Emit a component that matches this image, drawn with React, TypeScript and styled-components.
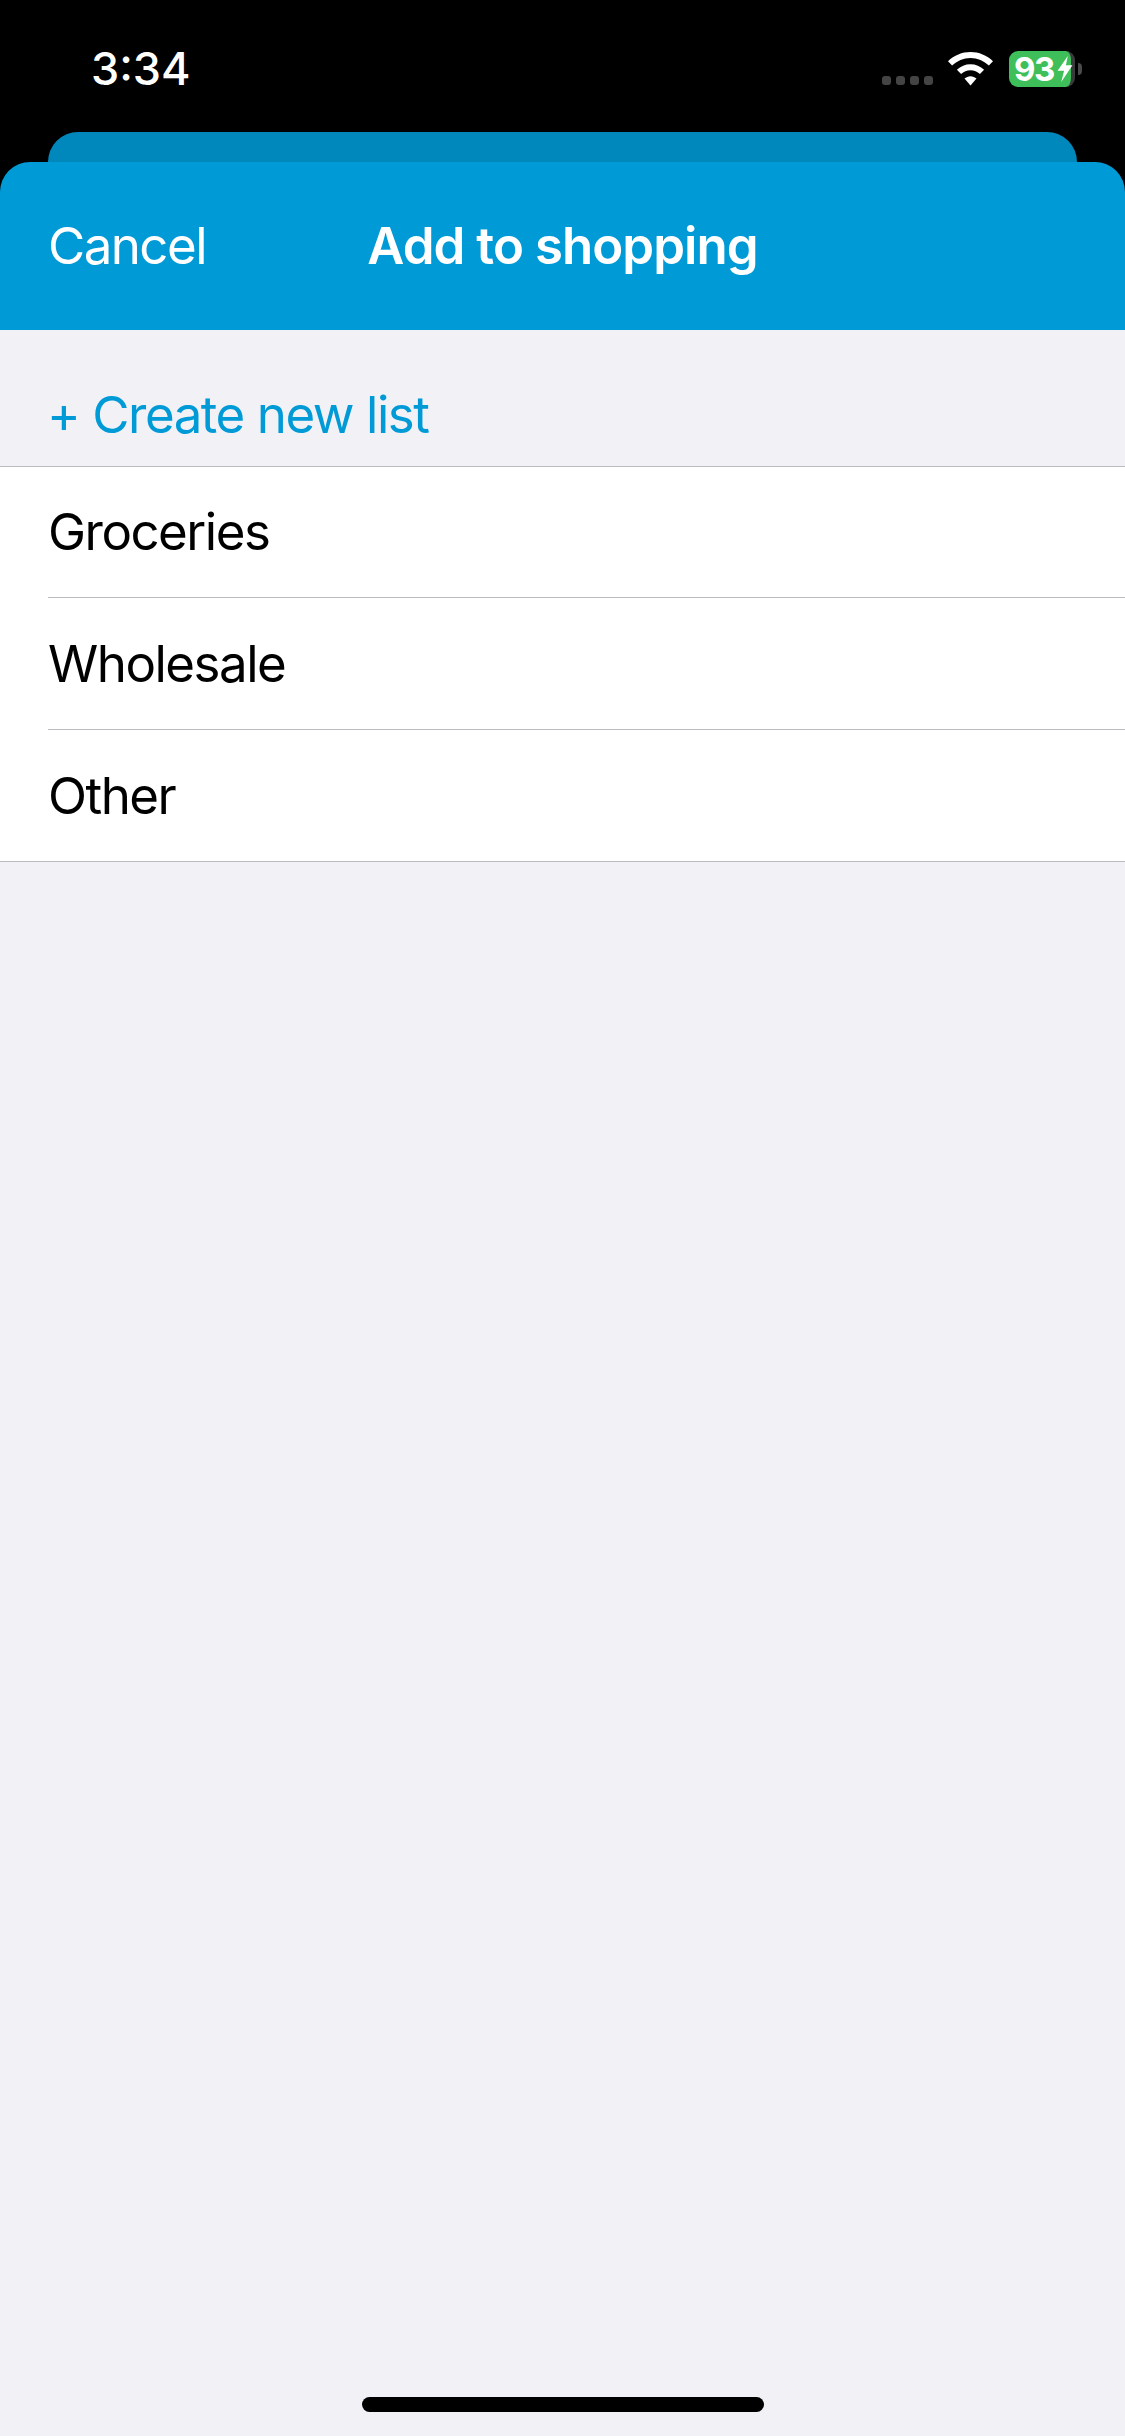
import React from "react";

import styled, { createGlobalStyle } from "styled-components";

const GlobalStyle = createGlobalStyle`
  html, body {
    margin: 0;
    padding: 0;
    background: #000;
    -webkit-font-smoothing: antialiased;
  }
`;

const Screen = styled.div`
  width: 1125px;
  height: 2436px;
  display: flex;
  flex-direction: column;
  overflow: hidden;
  background: #000;
  font-family: Inter, "Liberation Sans", sans-serif;
`;

const StatusBar = styled.div`
  height: 132px;
  flex: none;
  box-sizing: border-box;
  padding: 45px 43px 0 91px;
  display: flex;
  align-items: flex-start;
  justify-content: space-between;
`;

const Time = styled.div`
  color: #fff;
  font-size: 45px;
  font-weight: 500;
  line-height: 48px;
  letter-spacing: 0;
`;

const StatusIcons = styled.div`
  display: flex;
  align-items: flex-start;
  margin-top: 6px;
`;

const SignalDots = styled.div`
  display: flex;
  gap: 5px;
  margin: 25px 15px 0 0;
`;

const SignalDot = styled.span`
  width: 9px;
  height: 9px;
  border-radius: 3px;
  background: #444;
`;

const WifiIcon = styled.svg`
  width: 45px;
  height: 34px;
  margin: 1px 16px 0 0;
  display: block;
`;

const Battery = styled.div`
  display: flex;
  align-items: center;
  height: 36px;
`;

const BatteryBody = styled.div`
  width: 66px;
  height: 36px;
  box-sizing: border-box;
  border-radius: 9px;
  background: #3fbf5a;
  border-right: 4px solid #3a3a3c;
  display: flex;
  align-items: center;
  padding-left: 5px;
  color: #fff;
  font-size: 33px;
  font-weight: 700;
  line-height: 36px;
  letter-spacing: -1.5px;
`;

const BoltIcon = styled.svg`
  width: 16px;
  height: 26px;
  flex: none;
  margin-left: 3px;
`;

const BatteryCap = styled.span`
  width: 4px;
  height: 12px;
  margin-left: 3px;
  border-radius: 0 4px 4px 0;
  background: #4a4a4c;
`;

const BackSheet = styled.div`
  height: 30px;
  flex: none;
  margin: 0 48px;
  border-radius: 30px 30px 0 0;
  background: #0088bc;
`;

const Header = styled.header`
  height: 168px;
  flex: none;
  box-sizing: border-box;
  padding: 56px 48px 0;
  display: grid;
  grid-template-columns: 1fr auto 1fr;
  align-items: start;
  border-radius: 30px 30px 0 0;
  background: #009ad7;
  color: #fff;
  font-size: 51px;
  line-height: 56px;
  letter-spacing: -1.55px;
`;

const HeaderTitle = styled.div`
  font-weight: 600;
  letter-spacing: -0.95px;
`;

const Content = styled.main`
  flex: 1;
  display: flex;
  flex-direction: column;
  position: relative;
  background: #f1f1f6;
`;

const CreateLink = styled.div`
  height: 136px;
  box-sizing: border-box;
  padding: 57px 47px 0;
  color: #009ad7;
  font-size: 51px;
  line-height: 56px;
  letter-spacing: -1.45px;
`;

const List = styled.ul`
  margin: 0;
  padding: 0;
  list-style: none;
  background: #fff;
  border-top: 1px solid #bcbcc0;
  border-bottom: 1px solid #bcbcc0;
`;

const Row = styled.li`
  margin-left: 48px;
  height: 130px;
  box-sizing: border-box;
  display: flex;
  align-items: center;
  color: #000;
  font-size: 51px;
  line-height: 56px;
  letter-spacing: -1.5px;

  & + & {
    height: 132px;
    border-top: 1px solid #bcbcc0;
  }
`;

const HomeIndicator = styled.div`
  position: absolute;
  left: 362px;
  bottom: 24px;
  width: 402px;
  height: 15px;
  border-radius: 8px;
  background: #000;
`;

const lists = ["Groceries", "Wholesale", "Other"];

const App: React.FC = () => {
  return (
    <>
      <GlobalStyle />
      <Screen>
        <StatusBar>
          <Time>3:34</Time>
          <StatusIcons>
            <SignalDots>
              <SignalDot />
              <SignalDot />
              <SignalDot />
              <SignalDot />
            </SignalDots>
            <WifiIcon viewBox="0 0 45 34">
              <path
                d="M22.5 0C31 0 38.8 3.3 45 9.2L40.9 13.6C36 8.9 29.5 6 22.5 6S9 8.9 4.1 13.6L0 9.2C6.2 3.3 14 0 22.5 0Z"
                fill="#fff"
              />
              <path
                d="M22.5 12.2C27.6 12.2 32.4 14.2 36.1 17.7L31.9 22.1C29.4 19.7 26.1 18.3 22.5 18.3S15.6 19.7 13.1 22.1L8.9 17.7C12.6 14.2 17.4 12.2 22.5 12.2Z"
                fill="#fff"
              />
              <path
                d="M22.5 24.2C24.8 24.2 26.9 25.1 28.5 26.6L22.5 33.4L16.5 26.6C18.1 25.1 20.2 24.2 22.5 24.2Z"
                fill="#fff"
              />
            </WifiIcon>
            <Battery>
              <BatteryBody>
                93
                <BoltIcon viewBox="0 0 16 28">
                  <path d="M11 0L0 16H7L4 28L16 10H9L11 0Z" fill="#fff" />
                </BoltIcon>
              </BatteryBody>
              <BatteryCap />
            </Battery>
          </StatusIcons>
        </StatusBar>
        <BackSheet />
        <Header>
          <div>Cancel</div>
          <HeaderTitle>Add to shopping</HeaderTitle>
          <div />
        </Header>
        <Content>
          <CreateLink>+ Create new list</CreateLink>
          <List>
            {lists.map((name) => (
              <Row key={name}>{name}</Row>
            ))}
          </List>
          <HomeIndicator />
        </Content>
      </Screen>
    </>
  );
};

export default App;
